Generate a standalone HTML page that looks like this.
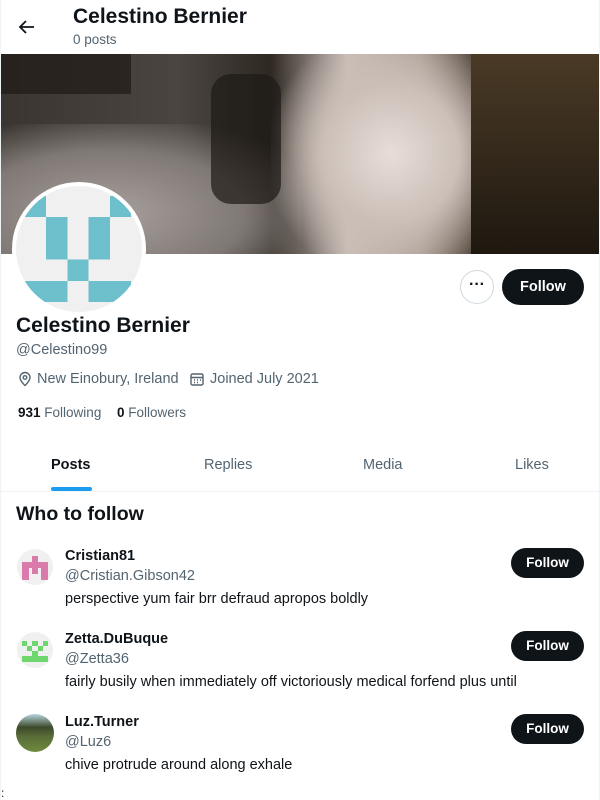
<!DOCTYPE html>
<html><head><meta charset="utf-8"><style>
*{margin:0;padding:0;box-sizing:border-box}
body{width:600px;height:800px;background:#fff;font-family:"Liberation Sans",Arial,sans-serif;color:#0f1419;position:relative;overflow:hidden}
.a{position:absolute;white-space:nowrap}
.btn{position:absolute;background:#0f1419;color:#fff;font-weight:bold;border-radius:18px;text-align:center}
.g{color:#536471}
</style></head><body>
<div class="a" style="left:0;top:0;width:1px;height:800px;background:#eff3f4"></div>
<div class="a" style="left:599px;top:0;width:1px;height:800px;background:#eff3f4"></div>
<svg class="a" style="left:17px;top:17px" width="20" height="20" viewBox="0 0 20 20"><path d="M17 10H3M9 4L3 10l6 6" stroke="#0f1419" stroke-width="1.8" fill="none"/></svg>
<div class="a" style="left:73px;top:5px;font-size:21px;font-weight:bold">Celestino Bernier</div>
<div class="a g" style="left:73px;top:32px;font-size:13.5px">0 posts</div>
<div class="a" style="left:1px;top:54px;width:598px;height:200px;overflow:hidden;background:linear-gradient(90deg,#3a3530 0%,#4a4540 30%,#2e2822 45%,#c9bdb6 58%,#a89a90 70%,#3a3026 82%,#2b2218 100%)">
<div class="a" style="left:-20px;top:70px;width:320px;height:150px;background:radial-gradient(ellipse at 40% 60%,#a8a09c 0%,#7f7874 50%,rgba(80,75,70,0) 80%)"></div>
<div class="a" style="left:270px;top:-20px;width:240px;height:240px;background:radial-gradient(ellipse at 50% 50%,#e8ddd8 0%,#cbbfb8 40%,rgba(160,150,140,0) 75%)"></div>
<div class="a" style="left:0;top:0;width:130px;height:40px;background:#231e1a;opacity:.8"></div>
<div class="a" style="left:210px;top:20px;width:70px;height:130px;background:#1e1a16;opacity:.7;border-radius:20px"></div>
<div class="a" style="left:470px;top:0;width:128px;height:200px;background:linear-gradient(180deg,#4a3a26,#1e1810)"></div>
</div>
<div class="a" style="left:12px;top:182px;width:134px;height:134px;border-radius:50%;background:#fff"></div>
<div class="a" style="left:16px;top:186px;width:126px;height:126px;border-radius:50%;background:#f0f0f0;overflow:hidden">
<svg class="a" style="left:9px;top:10px" width="106" height="106" viewBox="0 0 5 5" shape-rendering="crispEdges" fill="#6dbfcb"><rect x="0" y="0" width="1" height="1"/><rect x="4" y="0" width="1" height="1"/><rect x="1" y="1" width="1" height="2"/><rect x="3" y="1" width="1" height="2"/><rect x="2" y="3" width="1" height="1"/><rect x="0" y="4" width="2" height="1"/><rect x="3" y="4" width="2" height="1"/></svg>
</div>
<div class="a" style="left:460px;top:270px;width:34px;height:34px;border:1px solid #cfd9de;border-radius:50%;text-align:center;font-size:16px;font-weight:bold;line-height:28px">···</div>
<div class="btn" style="left:502px;top:269px;width:82px;height:36px;line-height:36px;font-size:14.5px">Follow</div>
<div class="a" style="left:16px;top:314px;font-size:21px;font-weight:bold">Celestino Bernier</div>
<div class="a g" style="left:16px;top:342px;font-size:14.5px">@Celestino99</div>
<svg class="a" style="left:17px;top:371px" width="16" height="16" viewBox="0 0 16 16"><path d="M8 14.5s-5-4.5-5-8a5 5 0 0110 0c0 3.5-5 8-5 8z" stroke="#536471" stroke-width="1.4" fill="none"/><circle cx="8" cy="6.5" r="1.8" stroke="#536471" stroke-width="1.4" fill="none"/></svg>
<div class="a g" style="left:37px;top:371px;font-size:14.5px">New Einobury, Ireland</div>
<svg class="a" style="left:189px;top:371px" width="16" height="16" viewBox="0 0 16 16"><rect x="2" y="3" width="12" height="11" rx="1.5" stroke="#536471" stroke-width="1.4" fill="none"/><path d="M2 6.5h12M5 9h1M8 9h1M11 9h1M5 11.5h1M8 11.5h1" stroke="#536471" stroke-width="1.4"/></svg>
<div class="a g" style="left:210px;top:371px;font-size:14.5px">Joined July 2021</div>
<div class="a" style="left:18px;top:405px;font-size:13.5px"><b>931</b> <span class="g">Following</span></div>
<div class="a" style="left:117px;top:405px;font-size:13.5px"><b>0</b> <span class="g">Followers</span></div>
<div class="a" style="left:51px;top:457px;font-size:14.5px;font-weight:bold">Posts</div>
<div class="a" style="left:51px;top:487px;width:41px;height:4px;border-radius:2px;background:#1d9bf0"></div>
<div class="a g" style="left:204px;top:457px;font-size:14.5px">Replies</div>
<div class="a g" style="left:363px;top:457px;font-size:14.5px">Media</div>
<div class="a g" style="left:515px;top:457px;font-size:14.5px">Likes</div>
<div class="a" style="left:0;top:491px;width:600px;height:1px;background:#eff3f4"></div>
<div class="a" style="left:16px;top:503px;font-size:19.5px;font-weight:bold">Who to follow</div>

<div class="a" style="left:17px;top:549px;width:36px;height:36px;border-radius:50%;background:#f0f0f0;overflow:hidden"><svg width="36" height="36" viewBox="0 0 36 36" shape-rendering="crispEdges" fill="#d97aaa"><rect x="15" y="7" width="6" height="6"/><rect x="5" y="13" width="26" height="6"/><rect x="5" y="19" width="7" height="12"/><rect x="15" y="19" width="6" height="6"/><rect x="24" y="19" width="7" height="12"/></svg></div>
<div class="a" style="left:65px;top:548px;font-size:14.5px;font-weight:bold">Cristian81</div>
<div class="a g" style="left:65px;top:568px;font-size:14.5px">@Cristian.Gibson42</div>
<div class="a" style="left:65px;top:591px;font-size:14.5px">perspective yum fair brr defraud apropos boldly</div>
<div class="btn" style="left:511px;top:548px;width:73px;height:30px;line-height:30px;font-size:13.5px">Follow</div>

<div class="a" style="left:17px;top:632px;width:36px;height:36px;border-radius:50%;background:#f0f0f0;overflow:hidden"><svg width="36" height="36" viewBox="0 0 36 36" shape-rendering="crispEdges" fill="#6dd66d"><rect x="5" y="9" width="5" height="5"/><rect x="15" y="9" width="6" height="5"/><rect x="26" y="9" width="5" height="5"/><rect x="10" y="14" width="5" height="5"/><rect x="21" y="14" width="5" height="5"/><rect x="15" y="19" width="6" height="5"/><rect x="5" y="24" width="26" height="6"/></svg></div>
<div class="a" style="left:65px;top:631px;font-size:14.5px;font-weight:bold">Zetta.DuBuque</div>
<div class="a g" style="left:65px;top:651px;font-size:14.5px">@Zetta36</div>
<div class="a" style="left:65px;top:674px;font-size:14.5px">fairly busily when immediately off victoriously medical forfend plus until</div>
<div class="btn" style="left:511px;top:631px;width:73px;height:30px;line-height:30px;font-size:13.5px">Follow</div>

<div class="a" style="left:16px;top:714px;width:38px;height:38px;border-radius:50%;overflow:hidden;background:linear-gradient(180deg,#b8d4e0 0%,#3c4a2a 35%,#5a6e38 60%,#6e8a3e 100%)"></div>
<div class="a" style="left:65px;top:714px;font-size:14.5px;font-weight:bold">Luz.Turner</div>
<div class="a g" style="left:65px;top:734px;font-size:14.5px">@Luz6</div>
<div class="a" style="left:65px;top:757px;font-size:14.5px">chive protrude around along exhale</div>
<div class="btn" style="left:511px;top:714px;width:73px;height:30px;line-height:30px;font-size:13.5px">Follow</div>
<div class="a" style="left:1px;top:786px;font-size:12px">:</div>
</body></html>
